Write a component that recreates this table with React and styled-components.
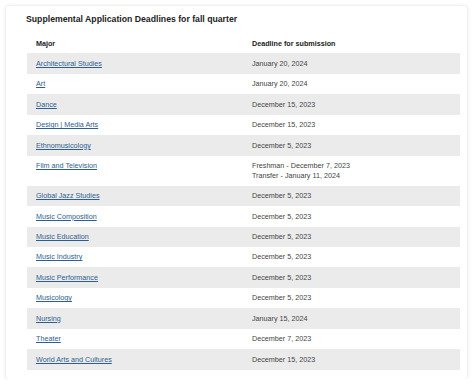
import React from 'react'
import styled, { createGlobalStyle } from 'styled-components'

const Global = createGlobalStyle`
  html, body {
    margin: 0;
    padding: 0;
    background: #ffffff;
    font-family: "Liberation Sans", Arial, Helvetica, sans-serif;
  }
`

const Card = styled.div`
  box-sizing: border-box;
  margin: 6px 6px 0 6px;
  width: 461px;
  height: 373px;
  background: #ffffff;
  border-radius: 3px;
  box-shadow: 0 0 4px rgba(0, 0, 0, 0.12), 0 0 1px rgba(0, 0, 0, 0.08);
  padding: 7px 7px 10px 20px;
`

const Title = styled.h2`
  margin: 0 0 7px 0;
  font-size: 8.7px;
  line-height: 13px;
  font-weight: 700;
  color: #222;
`

const Table = styled.div`
  margin-left: 1px;
  width: 433px;
  display: flex;
  flex-direction: column;
`

const Row = styled.div`
  display: grid;
  grid-template-columns: 216px 1fr;
  background: ${p => (p.$shaded ? '#ebebeb' : 'transparent')};
`

const Cell = styled.div`
  padding: 5.5px 9px;
  font-size: 7.2px;
  line-height: 9.45px;
  color: ${p => (p.$head ? '#222' : '#444')};
  font-weight: ${p => (p.$head ? 700 : 400)};
`

const Link = styled.a`
  color: #2d5e91;
  text-decoration: underline;
`

const rows = [
  ['Architectural Studies', ['January 20, 2024']],
  ['Art', ['January 20, 2024']],
  ['Dance', ['December 15, 2023']],
  ['Design | Media Arts', ['December 15, 2023']],
  ['Ethnomusicology', ['December 5, 2023']],
  ['Film and Television', ['Freshman - December 7, 2023', 'Transfer - January 11, 2024']],
  ['Global Jazz Studies', ['December 5, 2023']],
  ['Music Composition', ['December 5, 2023']],
  ['Music Education', ['December 5, 2023']],
  ['Music Industry', ['December 5, 2023']],
  ['Music Performance', ['December 5, 2023']],
  ['Musicology', ['December 5, 2023']],
  ['Nursing', ['January 15, 2024']],
  ['Theater', ['December 7, 2023']],
  ['World Arts and Cultures', ['December 15, 2023']],
]

const App = () => {
  return (
    <>
      <Global />
      <Card>
        <Title>Supplemental Application Deadlines for fall quarter</Title>
        <Table>
          <Row>
            <Cell $head>Major</Cell>
            <Cell $head>Deadline for submission</Cell>
          </Row>
          {rows.map(([major, dates], i) => (
            <Row key={major} $shaded={i % 2 === 0}>
              <Cell>
                <Link href="#">{major}</Link>
              </Cell>
              <Cell>
                {dates.map(d => (
                  <div key={d}>{d}</div>
                ))}
              </Cell>
            </Row>
          ))}
        </Table>
      </Card>
    </>
  )
}

export default App
